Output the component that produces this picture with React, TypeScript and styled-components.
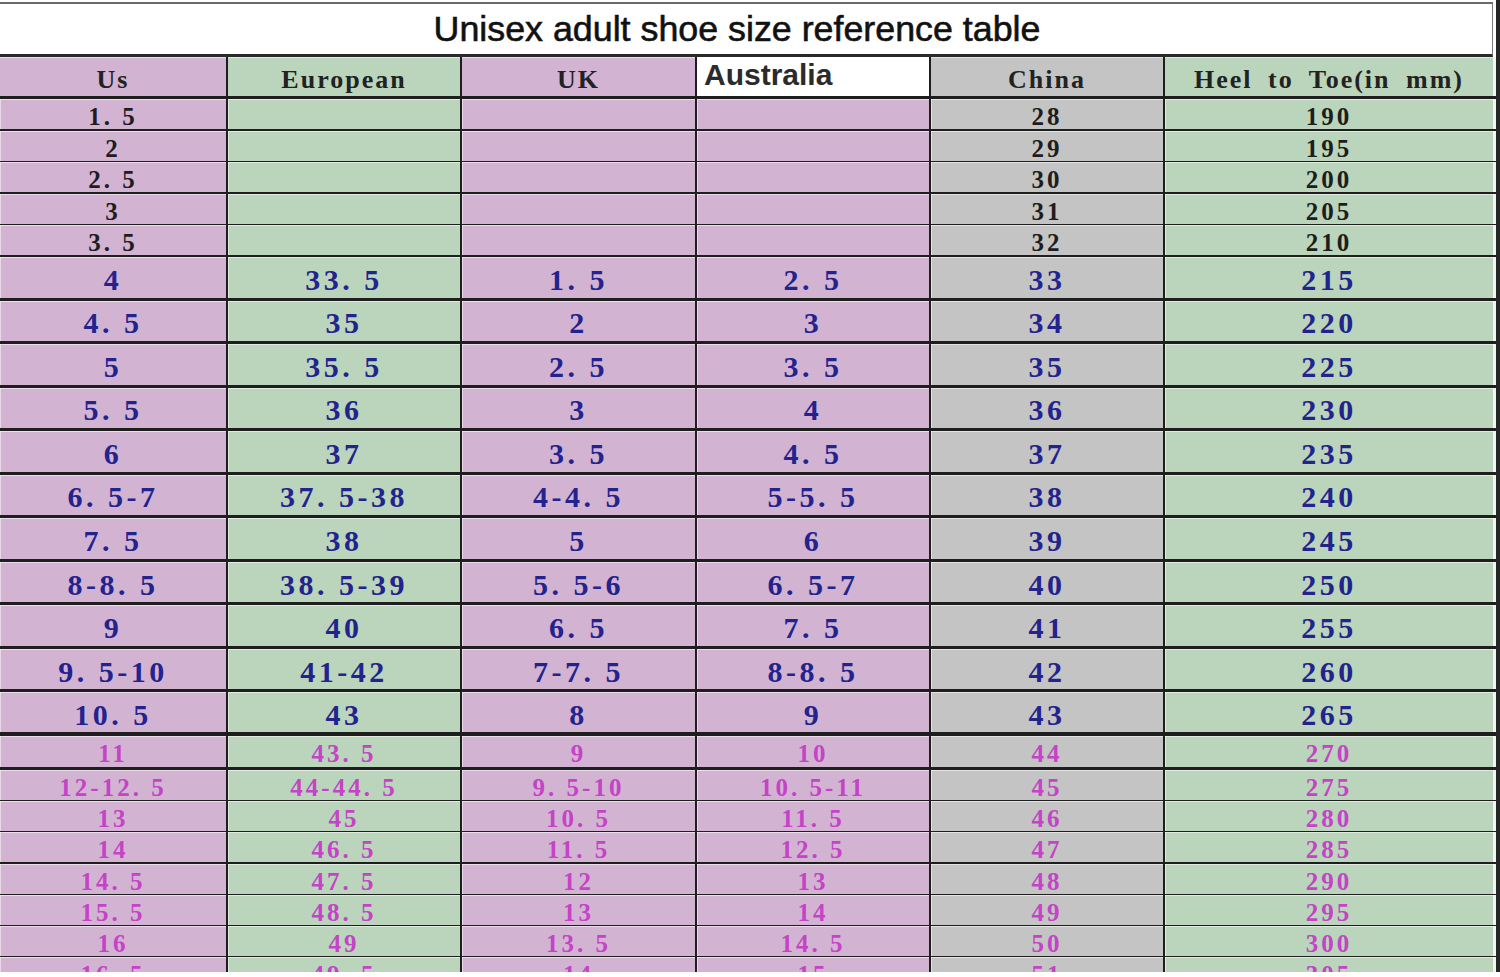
import styled, { createGlobalStyle } from "styled-components";

type Tone = "dark" | "blue" | "pink";
type Row = string[];

const GlobalStyle = createGlobalStyle`
  html, body {
    margin: 0;
    padding: 0;
    background: #ffffff;
  }
  body {
    font-family: "Liberation Sans", Arial, sans-serif;
  }
`;

const COLS = "228px 234px 235px 234px 234px 1fr";
const FILL = ["#d3b3d2", "#bad5bb", "#d3b3d2", "#d3b3d2", "#c4c4c4", "#bad5bb"];

const INK: Record<Tone, string> = {
  dark: "#1d1d1d",
  blue: "#23238e",
  pink: "#c443c6",
};

const SIZE: Record<Tone, { font: number; spacing: number }> = {
  dark: { font: 25, spacing: 3 },
  blue: { font: 30, spacing: 3.5 },
  pink: { font: 25, spacing: 3 },
};

const headers = ["Us", "European", "UK", "Australia", "China", "Heel to Toe(in mm)"];

// 사이즈가 작은 구간 (유럽/영국/호주 값 없음)
const smallRows: Row[] = [
  ["1.5", "", "", "", "28", "190"],
  ["2", "", "", "", "29", "195"],
  ["2.5", "", "", "", "30", "200"],
  ["3", "", "", "", "31", "205"],
  ["3.5", "", "", "", "32", "210"],
];

const mainRows: Row[] = [
  ["4", "33.5", "1.5", "2.5", "33", "215"],
  ["4.5", "35", "2", "3", "34", "220"],
  ["5", "35.5", "2.5", "3.5", "35", "225"],
  ["5.5", "36", "3", "4", "36", "230"],
  ["6", "37", "3.5", "4.5", "37", "235"],
  ["6.5-7", "37.5-38", "4-4.5", "5-5.5", "38", "240"],
  ["7.5", "38", "5", "6", "39", "245"],
  ["8-8.5", "38.5-39", "5.5-6", "6.5-7", "40", "250"],
  ["9", "40", "6.5", "7.5", "41", "255"],
  ["9.5-10", "41-42", "7-7.5", "8-8.5", "42", "260"],
  ["10.5", "43", "8", "9", "43", "265"],
];

const bigRows: Row[] = [
  ["11", "43.5", "9", "10", "44", "270"],
  ["12-12.5", "44-44.5", "9.5-10", "10.5-11", "45", "275"],
  ["13", "45", "10.5", "11.5", "46", "280"],
  ["14", "46.5", "11.5", "12.5", "47", "285"],
  ["14.5", "47.5", "12", "13", "48", "290"],
  ["15.5", "48.5", "13", "14", "49", "295"],
  ["16", "49", "13.5", "14.5", "50", "300"],
  ["16.5", "49.5", "14", "15", "51", "305"],
];

const fmt = (v: string) => v.replace(/\./g, ". ");

function SizeRow({ row, tone, height, thick }: { row: Row; tone: Tone; height: number; thick?: boolean }) {
  return (
    <GridRow $h={height} $thick={thick}>
      {row.map((v, i) => (
        <Cell key={i} $bg={FILL[i]} $tone={tone} $last={i === row.length - 1}>
          {fmt(v)}
        </Cell>
      ))}
    </GridRow>
  );
}

export default function App() {
  return (
    <>
      <GlobalStyle />
      <Sheet>
        <Title>Unisex adult shoe size reference table</Title>

        <GridRow $h={42}>
          {headers.map((h, i) =>
            i === 3 ? (
              <AusHead key={h}>{h}</AusHead>
            ) : (
              <HeadCell key={h} $bg={FILL[i]} $last={i === 5}>
                {h}
              </HeadCell>
            )
          )}
        </GridRow>

        {smallRows.map((r, i) => (
          <SizeRow key={"s" + i} row={r} tone="dark" height={31.6} thick={i === smallRows.length - 1} />
        ))}
        {mainRows.map((r, i) => (
          <SizeRow key={"m" + i} row={r} tone="blue" height={43.55} thick={i === mainRows.length - 1} />
        ))}
        {bigRows.map((r, i) => (
          <SizeRow key={"b" + i} row={r} tone="pink" height={i === 0 ? 34 : 31.2} />
        ))}
      </Sheet>
    </>
  );
}

const Sheet = styled.div`
  width: 1500px;
  height: 972px;
  overflow: hidden;
  box-sizing: border-box;
  border-right: 4px solid #262626;
  background: #ffffff;
  display: flex;
  flex-direction: column;
`;

const Title = styled.div`
  flex: none;
  box-sizing: border-box;
  height: 55px;
  margin-top: 2px;
  margin-right: 3px;
  border-top: 2px solid #6a6a6a;
  border-right: 1px solid #7a7a7a;
  border-bottom: 3px solid #2a2a2a;
  background: #ffffff;
  display: flex;
  align-items: center;
  justify-content: center;
  padding-right: 18px;
  font-family: "Liberation Sans", Arial, sans-serif;
  font-weight: 400;
  font-size: 35.8px;
  -webkit-text-stroke: 0.6px #111111;
  color: #111111;
`;

const GridRow = styled.div<{ $h: number; $thick?: boolean }>`
  flex: none;
  display: grid;
  grid-template-columns: ${COLS};
  height: ${({ $h }) => $h}px;
  box-sizing: border-box;
  border-bottom: ${({ $thick }) => ($thick ? 4 : 3)}px solid #1e1e1e;
`;

const Cell = styled.div<{ $bg: string; $tone: Tone; $last?: boolean }>`
  background: ${({ $bg }) => $bg};
  border-right: ${({ $last }) => ($last ? "3px solid #f4f4f4" : "2px solid #1e1e1e")};
  box-shadow: inset 0 1px 0 rgba(255, 255, 255, 0.55), inset 1px 0 0 rgba(255, 255, 255, 0.5);
  display: flex;
  align-items: center;
  justify-content: center;
  white-space: pre;
  font-family: "Liberation Serif", "Times New Roman", serif;
  font-weight: 700;
  font-size: ${({ $tone }) => SIZE[$tone].font}px;
  letter-spacing: ${({ $tone }) => SIZE[$tone].spacing}px;
  color: ${({ $tone }) => INK[$tone]};
  line-height: 1;
  padding-top: 5px;
`;

const HeadCell = styled.div<{ $bg: string; $last?: boolean }>`
  background: ${({ $bg }) => $bg};
  border-right: ${({ $last }) => ($last ? "3px solid #f4f4f4" : "2px solid #1e1e1e")};
  box-shadow: inset 0 1px 0 rgba(255, 255, 255, 0.55);
  display: flex;
  align-items: center;
  justify-content: center;
  padding-top: 6px;
  white-space: pre;
  font-family: "Liberation Serif", "Times New Roman", serif;
  font-weight: 700;
  font-size: 26px;
  letter-spacing: 2px;
  word-spacing: 7px;
  color: #222222;
  line-height: 1;
`;

const AusHead = styled.div`
  background: #ffffff;
  border-right: 2px solid #1e1e1e;
  display: flex;
  align-items: center;
  padding: 0 0 4px 7px;
  font-family: "Liberation Sans", Arial, sans-serif;
  font-weight: 700;
  font-size: 30px;
  color: #2b2b2b;
  line-height: 1;
`;
